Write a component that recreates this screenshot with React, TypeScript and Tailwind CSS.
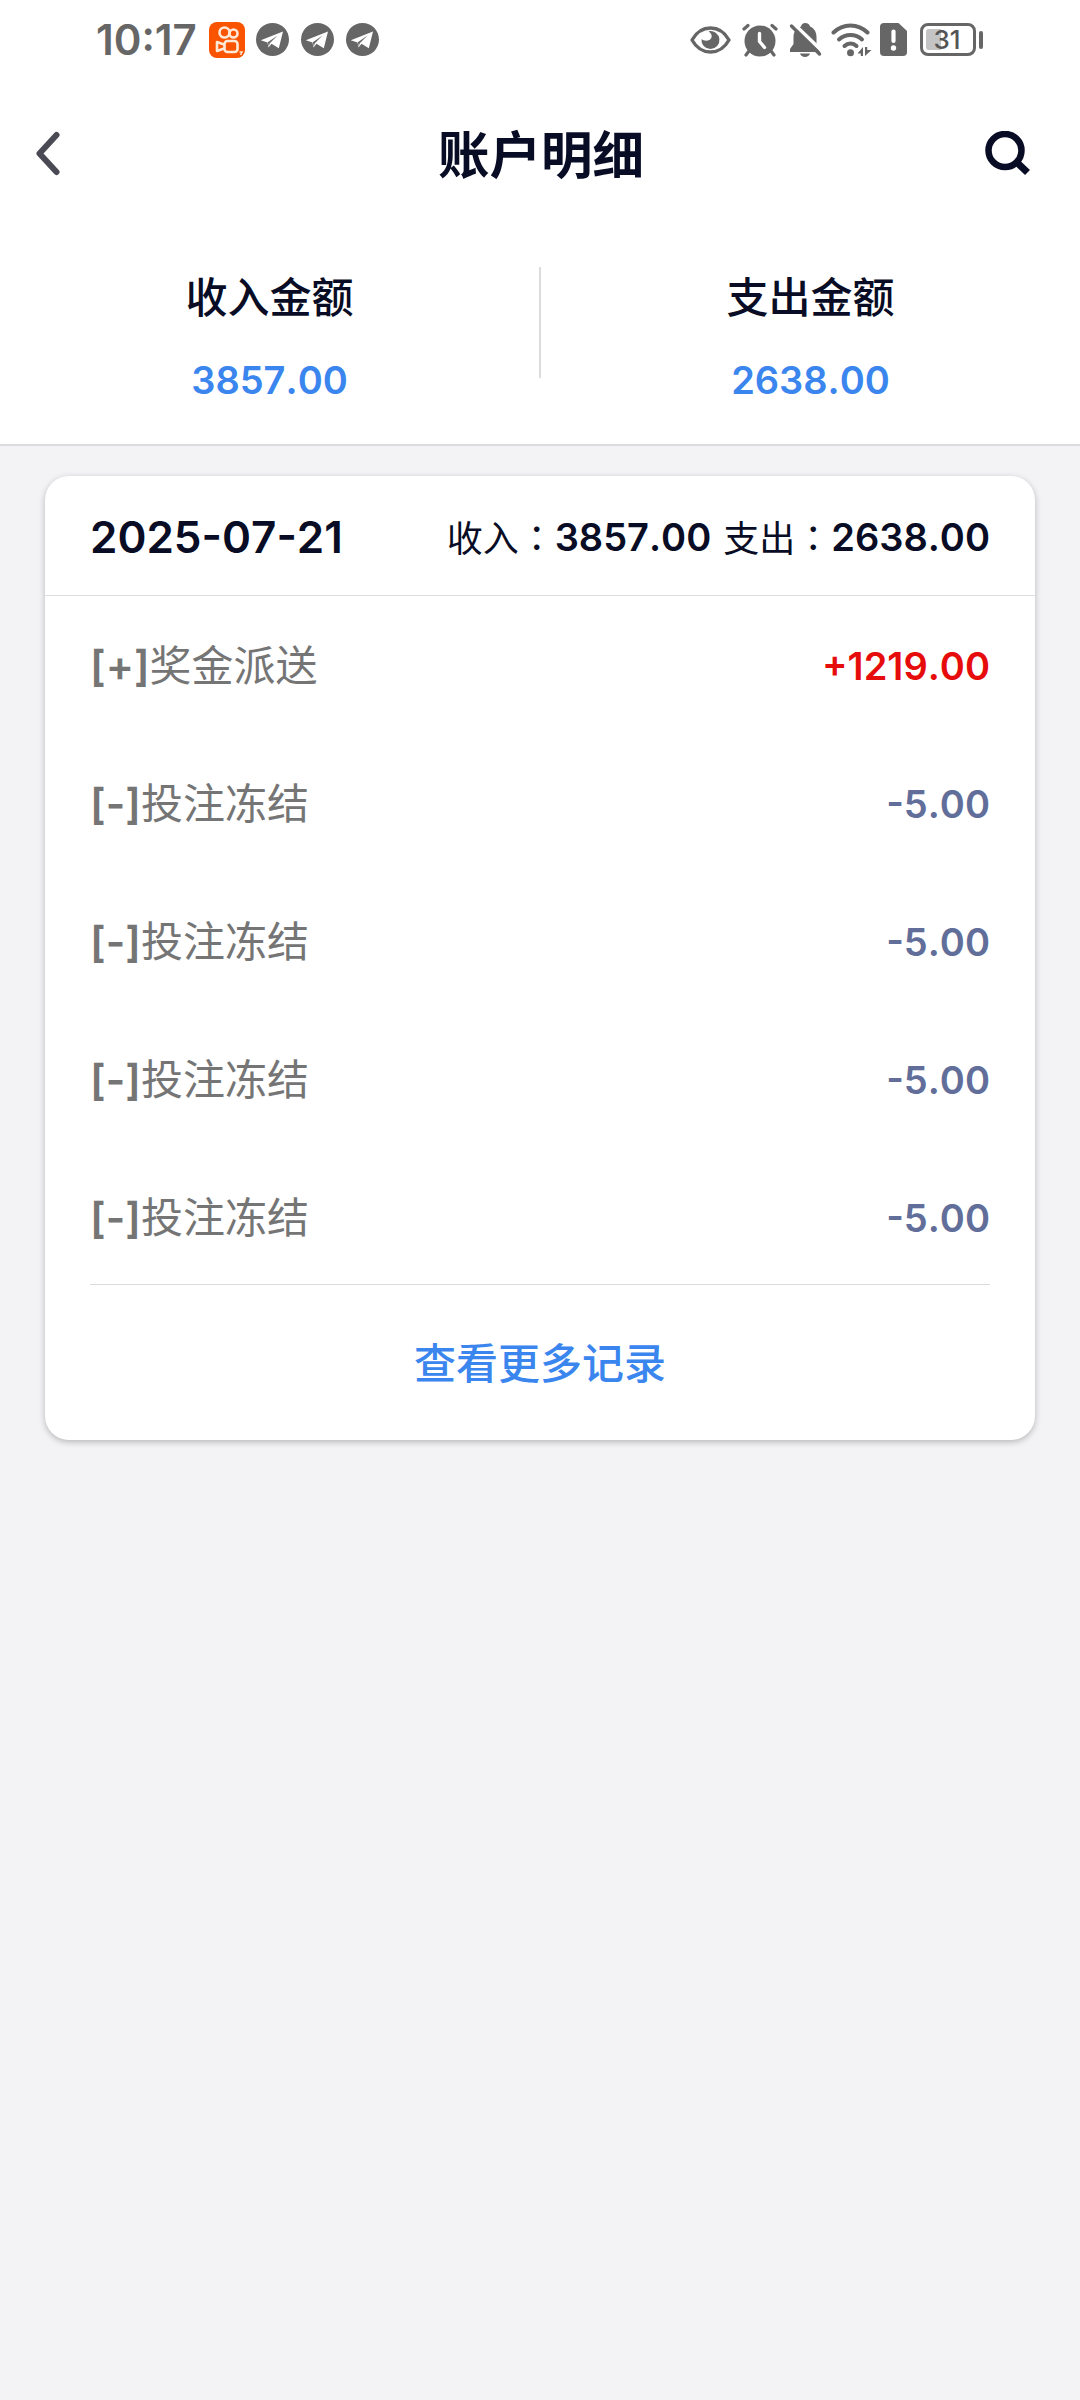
import type { ReactNode } from 'react';

const records = [
    { id: 1, sign: '[+]', label: '奖金派送', amount: '+1219.00', income: true },
    { id: 2, sign: '[-]', label: '投注冻结', amount: '-5.00', income: false },
    { id: 3, sign: '[-]', label: '投注冻结', amount: '-5.00', income: false },
    { id: 4, sign: '[-]', label: '投注冻结', amount: '-5.00', income: false },
    { id: 5, sign: '[-]', label: '投注冻结', amount: '-5.00', income: false },
];

function KuaishouIcon() {
    return (
        <svg width="36" height="36" viewBox="0 0 36 36" fill="none" stroke="#ffe9d6" strokeWidth="2.6">
            <rect width="36" height="36" rx="8" fill="#fa5400" stroke="none" />
            <circle cx="15.500" cy="10.5" r="5" />
            <circle cx="24.5" cy="11.5" r="4" />
            <rect x="15.500" y="19" width="13" height="11" rx="3" />
            <path d="M15 22.500L8 20V29L15 26.500" strokeLinejoin="round" />
            <path d="M30.500 30H33L31.500 33" strokeWidth="1.500" />
        </svg>
    );
}

function TelegramIcon() {
    return (
        <svg width="33" height="33" viewBox="0 0 33 33">
            <circle cx="16.500" cy="16.500" r="16.500" fill="#666" />
            <path d="M4.800 17.300L27 8.500L22.800 25.200L15.500 20.800L12.500 24.500L11.500 19.500Z" fill="#fff" />
            <path d="M11.800 19.200L21.500 12.500L13.800 20.300L12.800 23.500Z" fill="#666" />
        </svg>
    );
}

function EyeIcon() {
    return (
        <svg width="41" height="28" viewBox="0 0 41 28" fill="none">
            <path d="M2 14C11 -2 30 -2 39 14C30 30 11 30 2 14Z" stroke="#666" strokeWidth="3.400" strokeLinejoin="round" />
            <path d="M18.500 5.200A9 9 0 1 1 11.500 13C14 15.500 20 15.500 21.500 11.500C22.300 9 21 7 18.500 5.200Z" fill="#666" />
        </svg>
    );
}

function AlarmIcon() {
    return (
        <svg width="36" height="34" viewBox="0 0 36 34" fill="none" strokeLinecap="round">
            <circle cx="18" cy="18" r="15.500" fill="#666" />
            <path d="M2 6L6 2.500M34 6L30 2.500M7 28L4 32M29 28L32 32" stroke="#666" strokeWidth="3.200" />
            <path d="M17.500 10.500V18.500L22.500 24.500" stroke="#fff" strokeWidth="3.400" />
        </svg>
    );
}

function MutedBellIcon() {
    return (
        <svg width="33" height="34" viewBox="0 0 33 34" fill="none">
            <path d="M16 0C19 0 20.500 1.500 21 3.500C26 5.500 27.500 10 27.500 14V21L31 29H1V26L4.500 21V14C4.500 8 8 5 12 3.500C12.500 1.500 14 0 16 0Z" fill="#666" />
            <path d="M11 30.500H21C20 35 12 35 11 30.500Z" fill="#666" />
            <path d="M5 1L34 29" stroke="#fff" strokeWidth="3.500" />
            <path d="M2.500 3L30.500 31" stroke="#666" strokeWidth="3.400" strokeLinecap="round" />
        </svg>
    );
}

function WifiIcon() {
    return (
        <svg width="41" height="34" viewBox="0 0 41 34" fill="none" stroke="#666" strokeWidth="4" strokeLinecap="round">
            <path d="M2.500 9.500C12 0 27 0 36.500 9.500" />
            <path d="M8 16.500C14.500 10.500 24.500 10.500 31 16.500" />
            <path d="M13.500 23C17 19.500 22 19.500 25.500 23" />
            <circle cx="19.500" cy="29.800" r="3.500" fill="#666" stroke="none" />
            <path d="M32 24V33H29.800V30.500H26.500ZM34 33V24H36.200V27H40.500Z" fill="#666" stroke="none" />
        </svg>
    );
}

function SimAlertIcon() {
    return (
        <svg width="27" height="33" viewBox="0 0 27 33">
            <path d="M4 0H18.500L27 8V29A4 4 0 0 1 23 33H4A4 4 0 0 1 0 29V4A4 4 0 0 1 4 0Z" fill="#666" />
            <path d="M13.500 8.500V18" stroke="#fff" strokeWidth="4.200" strokeLinecap="round" />
            <circle cx="13.500" cy="25" r="2.700" fill="#fff" />
        </svg>
    );
}

function Battery() {
    return (
        <div className="flex items-center gap-[3px]">
            <div className="relative flex h-[33px] w-[56px] items-center justify-center rounded-[8px] border-3 border-[#666]">
                <span className="absolute top-[3px] left-[3px] h-[21px] w-[15px] rounded-l-[3px] bg-[#c4c4c4]" />
                <span className="relative right-px text-[26px] leading-none font-medium text-[#555]">31</span>
            </div>
            <span className="h-[18px] w-[4px] rounded-full bg-[#666]" />
        </div>
    );
}

function StatusBar() {
    return (
        <div className="flex h-[79px] items-center justify-between pr-[97px] pl-[96px]">
            <div className="flex items-center">
                <span className="w-[113px] pt-px text-[42px] leading-none font-semibold text-[#666]">10:17</span>
                <KuaishouIcon />
                <div className="ml-[11px] flex gap-3">
                    <TelegramIcon />
                    <TelegramIcon />
                    <TelegramIcon />
                </div>
            </div>
            <div className="flex items-center">
                <EyeIcon />
                <div className="ml-[11px] flex items-center"><AlarmIcon /></div>
                <div className="ml-[11px]"><MutedBellIcon /></div>
                <div className="ml-[9px]"><WifiIcon /></div>
                <div className="mr-[13px] ml-2"><SimAlertIcon /></div>
                <Battery />
            </div>
        </div>
    );
}

function Header() {
    return (
        <div className="flex h-[150px] items-center justify-between pr-[49px] pl-[35px]">
            <svg width="60" height="46" viewBox="0 0 60 46" fill="none">
                <path d="M21.500 4L4.500 22.500L21.500 41" stroke="#4a4a55" strokeWidth="6" strokeLinecap="round" strokeLinejoin="round" />
            </svg>
            <h1 className="pt-[3px] pl-[2px] text-[51.500px] leading-none font-bold">账户明细</h1>
            <svg width="46" height="46" viewBox="0 0 46 46" fill="none" stroke="#080c24">
                <circle cx="20" cy="19.500" r="16.500" strokeWidth="6.500" />
                <path d="M32 31.500L42.500 41.500" strokeWidth="7" />
            </svg>
        </div>
    );
}

function Total({ title, value }: { title: string; value: string }) {
    return (
        <div className="flex flex-1 flex-col items-center">
            <span className="text-[42px] leading-[62px] font-medium">{title}</span>
            <span className="mt-[21px] text-[38px] leading-[60px] font-semibold text-[#3b86ee]">{value}</span>
        </div>
    );
}

function Label({ children }: { children: ReactNode }) {
    return (
        <span className="text-[36px]">
            {children}
            <span className="font-['Noto_Sans_CJK_TC',sans-serif]">：</span>
        </span>
    );
}

export default function App() {
    return (
        <div className="min-h-[2400px] w-[1080px] bg-[#f3f3f5] font-['Inter','Noto_Sans_CJK_SC',sans-serif] text-[#080c24] [font-kerning:none]">
            <div className="h-[446px] border-b-2 border-[#dadce2] bg-white">
                <StatusBar />
                <Header />
                <div className="flex pt-[38px]">
                    <Total title="收入金额" value="3857.00" />
                    <span className="h-[111px] w-[2px] bg-[#dcdcde]" />
                    <Total title="支出金额" value="2638.00" />
                </div>
            </div>

            {/* daily records */}
            <div className="mx-[45px] mt-[30px] h-[964px] rounded-[24px] bg-white shadow-[0_2px_6px_rgba(0,0,0,0.25)]">
                <div className="flex h-[120px] items-center justify-between border-b border-[#dcdfe2] px-[45px]">
                    <span className="pt-[3px] text-[44px] font-semibold">2025-07-21</span>
                    <div className="flex items-center pt-[3px] leading-[54px]">
                        <Label>收入</Label>
                        <span className="mr-[12px] text-[38px] font-semibold">3857.00</span>
                        <Label>支出</Label>
                        <span className="text-[38px] font-semibold">2638.00</span>
                    </div>
                </div>
                <div className="px-[45px]">
                    {records.map(record => (
                        <div key={record.id} className="flex h-[138px] items-center justify-between">
                            <span className="text-[42px] text-[#757575]">
                                <span className="font-semibold">{record.sign}</span>{record.label}
                            </span>
                            <span className={record.income ? 'pt-[2px] text-[38px] font-semibold text-[#e60c0c]' : 'pt-[2px] text-[38px] font-semibold text-[#626e9a]'}>
                                {record.amount}
                            </span>
                        </div>
                    ))}
                    <div className="-mt-[2px] flex h-[157px] items-center justify-center border-t border-[#dcdcdc] text-[42px] font-medium text-[#3b86ee]">
                        查看更多记录
                    </div>
                </div>
            </div>
        </div>
    );
}
